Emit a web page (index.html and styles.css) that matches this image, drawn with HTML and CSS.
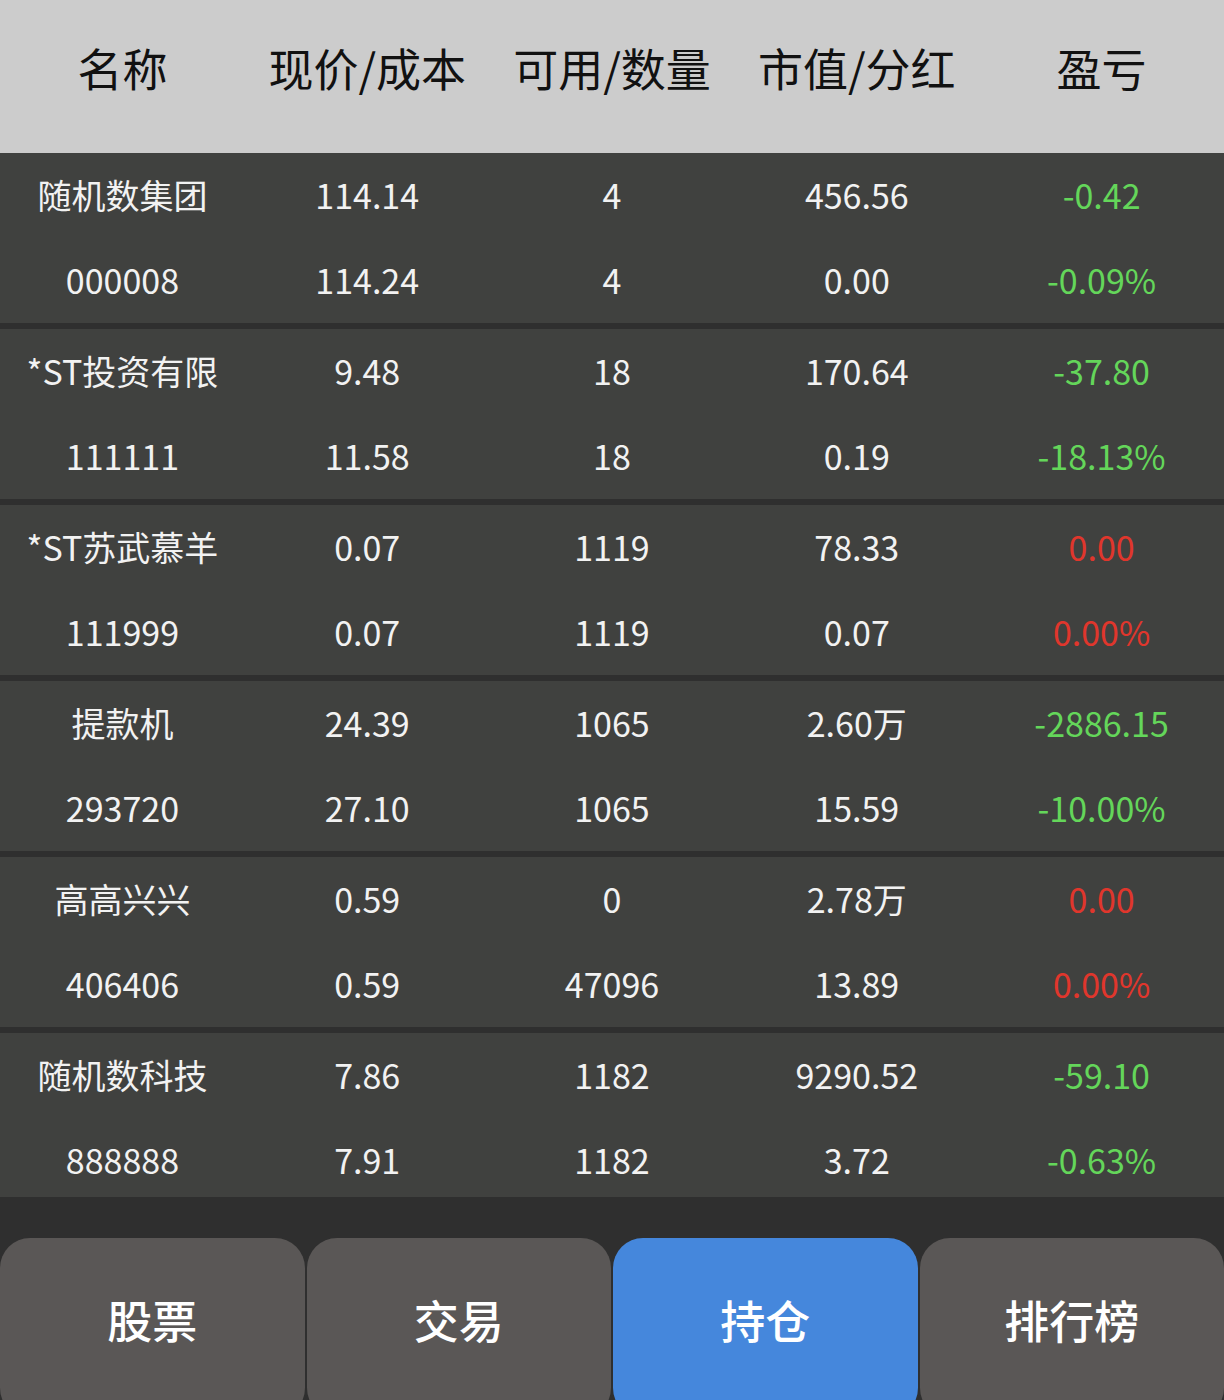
FILE: index.html
```html
<!DOCTYPE html>
<html lang="zh-CN">
<head>
  <meta charset="UTF-8">
  <meta name="viewport" content="width=device-width, initial-scale=1.0">
  <title>持仓</title>
  <link rel="stylesheet" href="styles.css">
</head>
<body>
  <div class="head">
    <div>名称</div>
    <div>现价/成本</div>
    <div>可用/数量</div>
    <div>市值/分红</div>
    <div>盈亏</div>
  </div>

  <div class="list">
    <div class="item">
      <div>随机数集团</div><div>114.14</div><div>4</div><div>456.56</div><div class="down">-0.42</div>
      <div>000008</div><div>114.24</div><div>4</div><div>0.00</div><div class="down">-0.09%</div>
    </div>
    <div class="item">
      <div>*ST投资有限</div><div>9.48</div><div>18</div><div>170.64</div><div class="down">-37.80</div>
      <div>111111</div><div>11.58</div><div>18</div><div>0.19</div><div class="down">-18.13%</div>
    </div>
    <div class="item">
      <div>*ST苏武慕羊</div><div>0.07</div><div>1119</div><div>78.33</div><div class="up">0.00</div>
      <div>111999</div><div>0.07</div><div>1119</div><div>0.07</div><div class="up">0.00%</div>
    </div>
    <div class="item">
      <div>提款机</div><div>24.39</div><div>1065</div><div>2.60万</div><div class="down">-2886.15</div>
      <div>293720</div><div>27.10</div><div>1065</div><div>15.59</div><div class="down">-10.00%</div>
    </div>
    <div class="item">
      <div>高高兴兴</div><div>0.59</div><div>0</div><div>2.78万</div><div class="up">0.00</div>
      <div>406406</div><div>0.59</div><div>47096</div><div>13.89</div><div class="up">0.00%</div>
    </div>
    <div class="item">
      <div>随机数科技</div><div>7.86</div><div>1182</div><div>9290.52</div><div class="down">-59.10</div>
      <div>888888</div><div>7.91</div><div>1182</div><div>3.72</div><div class="down">-0.63%</div>
    </div>
  </div>

  <div class="tabs">
    <button>股票</button>
    <button>交易</button>
    <button class="active">持仓</button>
    <button>排行榜</button>
  </div>
</body>
</html>
```

FILE: styles.css
```css
body {
  margin: 0;
  background: #2f2f2f;
  font-family: "Noto Sans CJK SC", sans-serif;
  overflow: hidden;
}
.head {
  display: grid;
  grid-template-columns: repeat(5, 1fr);
  align-items: center;
  height: 153px;
  background: #cccccc;
  color: #111;
  font-size: 45px;
  text-align: center;
  padding-bottom: 18px;
  box-sizing: border-box;
}
.list {
  height: 1044px;
  overflow: hidden;
  display: flex;
  flex-direction: column;
  gap: 6px;
}
.item {
  flex: none;
  display: grid;
  grid-template-columns: repeat(5, 1fr);
  grid-auto-rows: 85px;
  align-items: center;
  background: #40413f;
  color: #f2f2f2;
  font-size: 34px;
  text-align: center;
}
.item div {
  padding-bottom: 2px;
}
.down {
  color: #64d65a;
}
.up {
  color: #e0362c;
}
.tabs {
  display: flex;
  gap: 2px;
  padding-top: 41px;
}
.tabs button {
  flex: 1;
  height: 180px;
  padding-bottom: 18px;
  border: none;
  border-radius: 30px;
  background: #5a5756;
  color: #fff;
  font-family: inherit;
  font-size: 45px;
  font-weight: 500;
}
.tabs .active {
  background: #4587dc;
}
```
